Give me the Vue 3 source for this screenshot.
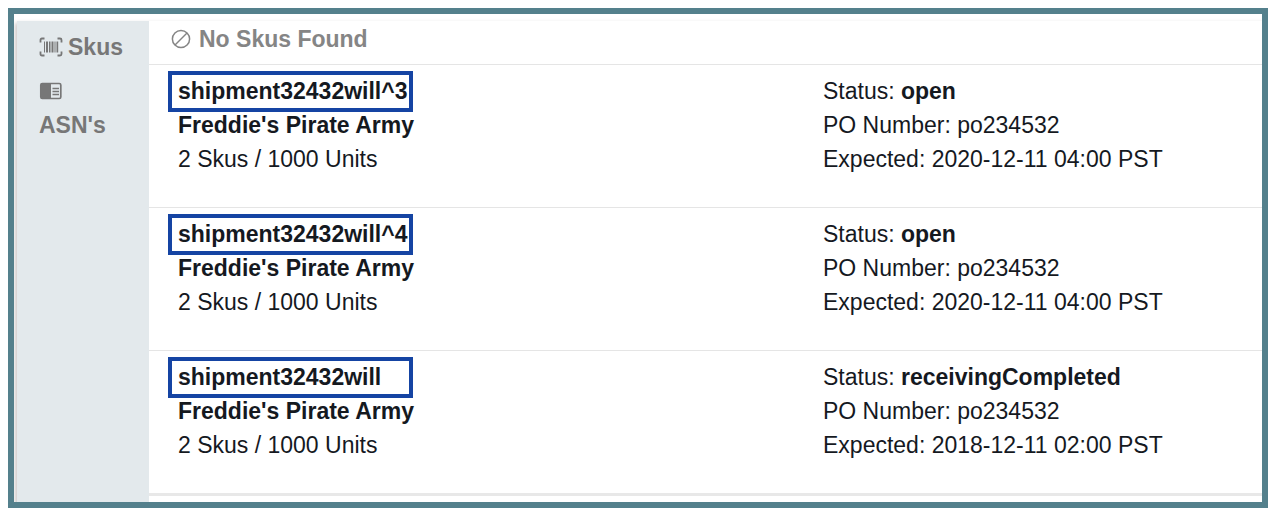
<script setup>
const shipments = [
  { name: 'shipment32432will^3', status: 'open', expected: '2020-12-11 04:00 PST' },
  { name: 'shipment32432will^4', status: 'open', expected: '2020-12-11 04:00 PST' },
  { name: 'shipment32432will', status: 'receivingCompleted', expected: '2018-12-11 02:00 PST' },
]
</script>

<template>
  <div class="frame">
    <div class="panel">
      <nav class="sidebar">
        <a href="#skus" class="nav-link">
          <svg class="icon" viewBox="0 0 24 20" aria-hidden="true">
            <path d="M1.500 5.500V3q0-1.500 1.500-1.500h2.500M18.500 1.500H21q1.500 0 1.500 1.500v2.500M22.500 14.500V17q0 1.500-1.500 1.500h-2.500M5.500 18.500H3q-1.500 0-1.500-1.500v-2.500" fill="none" stroke="currentColor" stroke-width="1.800" />
            <path d="M5 4.500h1v11H5zM7 4.500h2v11H7zM10 4.500h1.500v11H10zM12.500 4.500h2v11h-2zM15.500 4.500h1v11h-1zM17.500 4.500h1.700v11h-1.700z" fill="currentColor" />
          </svg>
          <span>Skus</span>
        </a>
        <a href="#asns" class="nav-link stacked">
          <svg class="icon" viewBox="0 0 24 20" aria-hidden="true">
            <rect x="1.800" y="2.500" width="20" height="15" rx="1.500" fill="none" stroke="currentColor" stroke-width="1.700" />
            <path d="M2 2.500h10v15H2z" fill="currentColor" />
            <path d="M13.500 7.500H20M13.500 10.500H20M13.500 13.500H20" stroke="currentColor" stroke-width="1.300" />
          </svg>
          <span>ASN's</span>
        </a>
      </nav>
      <main class="content">
        <p class="empty">
          <svg class="none-icon" viewBox="0 0 20 20" aria-hidden="true">
            <circle cx="10" cy="10" r="8.600" fill="none" stroke="currentColor" stroke-width="1.500" />
            <path d="M4 16 16 4" stroke="currentColor" stroke-width="1.500" />
          </svg>
          <span>No Skus Found</span>
        </p>
        <section v-for="item in shipments" :key="item.name" class="row">
          <div>
            <div class="name">{{ item.name }}</div>
            <div class="owner">Freddie's Pirate Army</div>
            <div>2 Skus / 1000 Units</div>
          </div>
          <div>
            <div>Status: <b>{{ item.status }}</b></div>
            <div>PO Number: po234532</div>
            <div>Expected: {{ item.expected }}</div>
          </div>
        </section>
      </main>
    </div>
  </div>
</template>

<style>
body {
  background: #fff;
}
</style>

<style scoped>
.frame {
  box-sizing: border-box;
  margin: 8px 2px 6px 8px;
  padding-top: 7px;
  border: 6px solid #54808c;
  overflow: hidden;
  font-family: "Liberation Sans", Arial, sans-serif;
  font-size: 23px;
  line-height: 34px;
  color: #15191f;
}
.panel {
  display: flex;
  margin-left: 3px;
  box-shadow: 0 4px 4px 2px rgba(60, 40, 35, 0.25);
}
.sidebar {
  flex: 0 0 132px;
  box-sizing: border-box;
  padding: 9px 22px;
  background: #e3e9ec;
}
.nav-link {
  display: flex;
  align-items: center;
  gap: 5px;
  margin-bottom: 10px;
  color: #777;
  font-weight: bold;
  text-decoration: none;
}
.nav-link.stacked {
  flex-direction: column;
  align-items: flex-start;
  gap: 0;
}
.icon {
  flex: none;
  width: 24px;
  height: 20px;
}
.stacked .icon {
  margin: 7px 0;
}
.content {
  flex: 1;
  background: #fff;
  padding-bottom: 6px;
}
.empty {
  display: flex;
  align-items: center;
  gap: 8px;
  margin: 0;
  padding: 1px 22px 8px;
  border-bottom: 1px solid #e5e5e5;
  color: #858585;
  font-weight: bold;
}
.none-icon {
  width: 20px;
  height: 20px;
}
.row {
  display: grid;
  grid-template-columns: 645fr 439fr;
  padding: 9px 0 31px 29px;
  border-bottom: 1px solid #e5e5e5;
}
.row:last-child {
  border-bottom: 3px solid #e8e8e8;
}
.name {
  box-sizing: border-box;
  width: 245px;
  margin: -3px 0 -4px -10px;
  padding: 0 6px;
  border: 4px solid #1544a3;
  line-height: 33px;
  font-weight: bold;
}
.owner {
  font-weight: bold;
}
</style>
